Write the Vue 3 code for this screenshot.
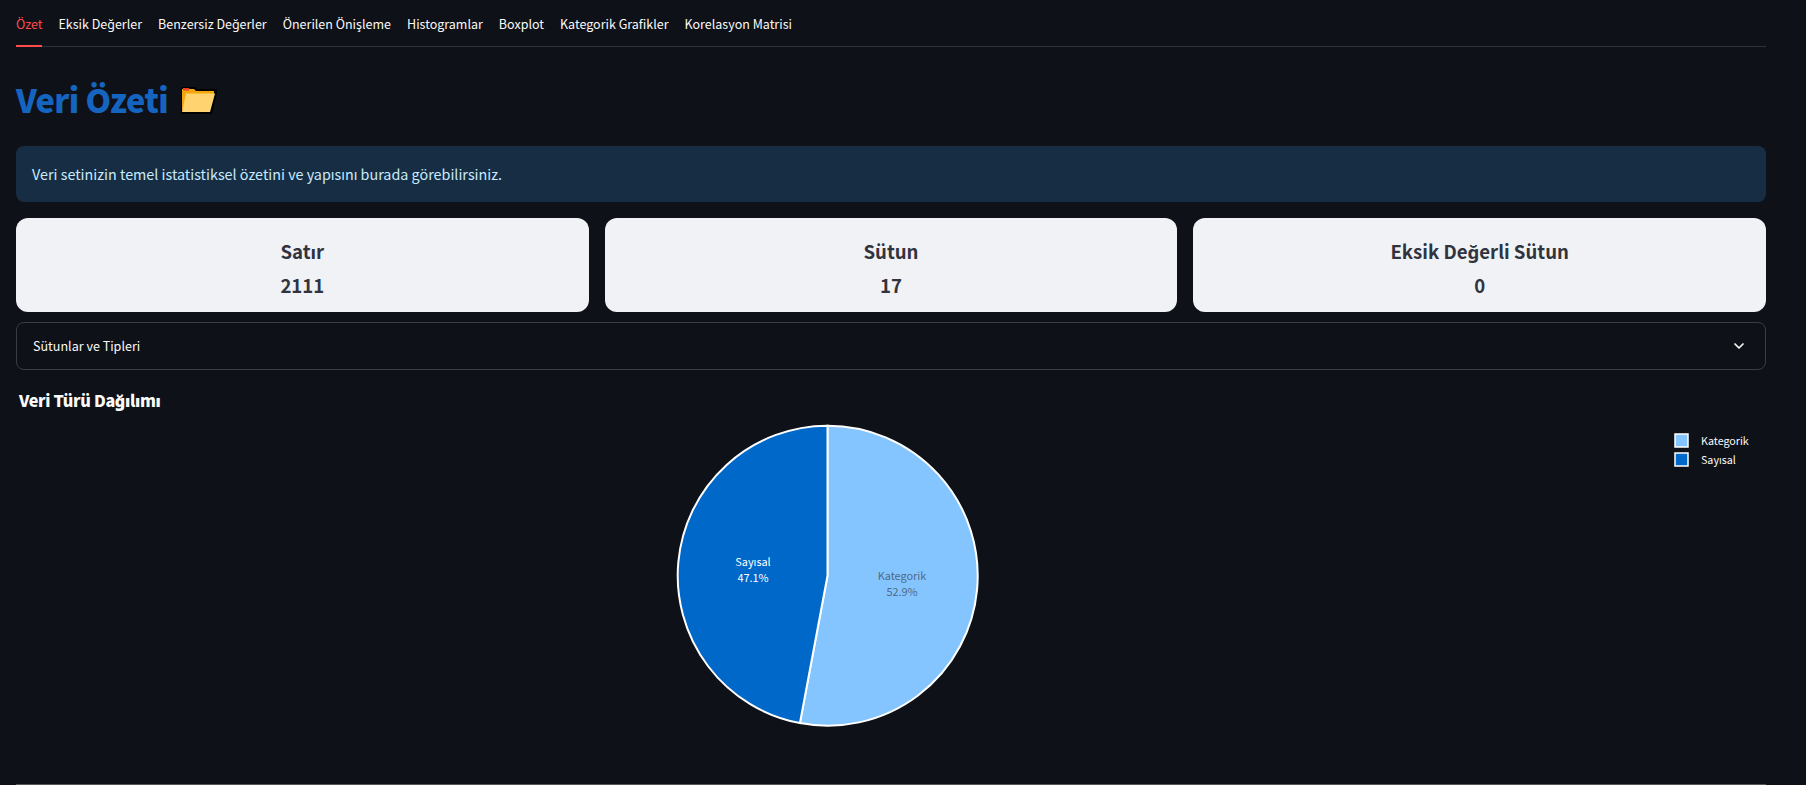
<script setup>
const tabs = ['Özet', 'Eksik Değerler', 'Benzersiz Değerler', 'Önerilen Önişleme', 'Histogramlar', 'Boxplot', 'Kategorik Grafikler', 'Korelasyon Matrisi']
const cards = [
  { label: 'Satır', value: '2111' },
  { label: 'Sütun', value: '17' },
  { label: 'Eksik Değerli Sütun', value: '0' },
]
</script>

<template>
  <div class="page">
    <nav class="tabs">
      <span v-for="(t, i) in tabs" :key="t" class="tab" :class="{ active: i === 0 }">{{ t }}</span>
    </nav>

    <h1 class="title">
      <span>Veri Özeti</span>
      <svg class="folder" width="38" height="28" viewBox="0 0 38 28">
        <path d="M1 0H14L16 2H36V6L31 27H0V1z" fill="#000" />
        <path d="M1 2H13L15 4H33V8H6L1 25z" fill="#f2a60c" />
        <path d="M2 1H8V3.500H2z" fill="#e8402a" />
        <path d="M5 6.500H34L29 25H1z" fill="#ffd470" />
      </svg>
    </h1>

    <div class="info">Veri setinizin temel istatistiksel özetini ve yapısını burada görebilirsiniz.</div>

    <section class="cards">
      <div v-for="c in cards" :key="c.label" class="card">
        <div class="card-label">{{ c.label }}</div>
        <div class="card-value">{{ c.value }}</div>
      </div>
    </section>

    <div class="expander">
      <span class="expander-label">Sütunlar ve Tipleri</span>
      <svg width="20" height="20" viewBox="0 0 20 20" fill="none" stroke="#fafafa" stroke-width="1.700" stroke-linecap="round" stroke-linejoin="round">
        <path d="M6 8l4 4 4-4" />
      </svg>
    </div>

    <h3 class="chart-title">Veri Türü Dağılımı</h3>

    <svg class="chart" width="1750" height="368" viewBox="0 0 1750 368">
      <g transform="translate(811.500 159.700)" stroke="#fff" stroke-width="2">
        <path d="M0 0V-150A150 150 0 1 1 -27.600 147.400Z" fill="#85c5ff" />
        <path d="M0 0L-27.600 147.400A150 150 0 0 1 0 -150Z" fill="#0068c9" />
      </g>
      <g class="pie-label dark" text-anchor="middle">
        <text x="886" y="164">Kategorik</text>
        <text x="886" y="180">52.9%</text>
      </g>
      <g class="pie-label light" text-anchor="middle">
        <text x="737" y="150">Sayısal</text>
        <text x="737" y="166">47.1%</text>
      </g>
      <rect x="1659" y="18" width="13" height="13" fill="#85c5ff" stroke="#fff" stroke-width="1.500" />
      <rect x="1659" y="37" width="13" height="13" fill="#0068c9" stroke="#fff" stroke-width="1.500" />
      <text class="legend" x="1685" y="29">Kategorik</text>
      <text class="legend" x="1685" y="48">Sayısal</text>
    </svg>
  </div>
</template>

<style>
html, body { background: #0e1117; }
</style>

<style scoped>
.page {
  box-sizing: border-box;
  width: 1806px;
  height: 785px;
  overflow: hidden;
  padding: 0 40px 0 16px;
  background: #0e1117;
  color: #fafafa;
  font-family: "Noto Sans CJK SC", "Noto Sans", sans-serif;
  display: flex;
  flex-direction: column;
}
.tabs {
  display: flex;
  gap: 16px;
  height: 47px;
  box-sizing: border-box;
  border-bottom: 1px solid #31333b;
}
.tab {
  font-size: 12.500px;
  line-height: 48px;
  height: 47px;
  box-sizing: border-box;
  white-space: nowrap;
}
.tab.active {
  color: #ff4b4b;
  border-bottom: 2px solid #ff4b4b;
}
.title {
  margin: 28px 0 0;
  height: 48px;
  display: flex;
  align-items: center;
  gap: 13px;
  font-size: 32.500px;
  line-height: 48px;
  font-weight: 900;
  letter-spacing: -0.600px;
  color: #1565c0;
}
.folder { flex: none; margin-top: 3px; }
.info {
  margin-top: 23px;
  height: 56px;
  box-sizing: border-box;
  padding: 0 16px;
  border-radius: 8px;
  background: #172d43;
  color: #c7ebff;
  font-size: 14.350px;
  line-height: 56px;
}
.cards {
  margin-top: 16px;
  display: grid;
  grid-template-columns: repeat(3, 1fr);
  gap: 16px;
}
.card {
  height: 94px;
  border-radius: 12px;
  background: #f0f2f6;
  color: #31333f;
  text-align: center;
  font-size: 18.600px;
  font-weight: 700;
  padding-top: 16px;
  box-sizing: border-box;
}
.card-label, .card-value {
  line-height: 34px;
}
.expander {
  margin-top: 10px;
  height: 48px;
  box-sizing: border-box;
  border: 1px solid #3a3d45;
  border-radius: 8px;
  padding: 0 16px;
  display: flex;
  align-items: center;
  justify-content: space-between;
  font-size: 12.550px;
}
.expander-label { margin-bottom: 2px; }
.chart-title {
  margin: 18px 0 0 3px;
  height: 24px;
  font-size: 16.200px;
  line-height: 24px;
  font-weight: 900;
  letter-spacing: -0.320px;
  color: #fafafa;
}
.chart {
  display: block;
  flex: none;
  margin-top: 4px;
  border-bottom: 1px solid #555;
}
.pie-label text {
  font-size: 10.900px;
}
.pie-label.dark text { fill: #4d6a85; }
.pie-label.light text { fill: #ffffff; }
.legend {
  font-size: 10.700px;
  fill: #fafafa;
}
</style>
